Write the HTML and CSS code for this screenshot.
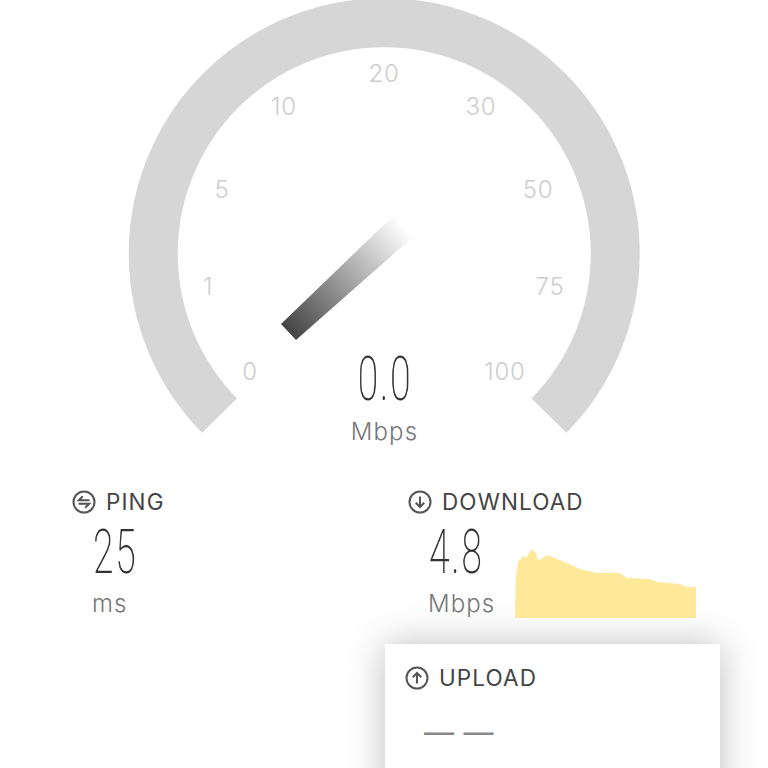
FILE: index.html
```html
<!DOCTYPE html>
<html lang="en">
<head>
<meta charset="utf-8">
<title>Speed test</title>
<link rel="stylesheet" href="styles.css">
</head>
<body>
<main class="app">
  <section class="gauge">
    <svg class="dial" width="768" height="470" viewBox="0 0 768 470" aria-hidden="true">
      <defs>
        <linearGradient id="needle" gradientUnits="userSpaceOnUse" x1="289" y1="332" x2="404" y2="226">
          <stop offset="0" stop-color="#444"/>
          <stop offset="1" stop-color="#fff"/>
        </linearGradient>
      </defs>
      <path class="arc" d="M219.500 415.600A231 231 0 1 1 549 415.600"/>
      <polygon points="281,324 296,340 414,236 393,216" fill="url(#needle)"/>
      <text class="tick" x="250" y="380">0</text>
      <text class="tick" x="208" y="295">1</text>
      <text class="tick" x="222" y="198">5</text>
      <text class="tick" x="284" y="115">10</text>
      <text class="tick" x="384" y="82">20</text>
      <text class="tick" x="481" y="115">30</text>
      <text class="tick" x="538" y="198">50</text>
      <text class="tick" x="550" y="295">75</text>
      <text class="tick" x="505" y="380">100</text>
    </svg>
    <div class="readout">
      <div class="num num-center">0.0</div>
      <div class="unit">Mbps</div>
    </div>
  </section>

  <section class="stats">
    <div class="stat">
      <h2 class="stat-head">
        <svg class="icon" width="24" height="24" viewBox="0 0 24 24" aria-hidden="true">
          <circle cx="12" cy="12" r="10.500"/>
          <path d="M17.500 10.300H6.800L10.800 6.300M6.500 13.700H17.200L13.200 17.700"/>
        </svg>
        <span class="stat-label">PING</span>
      </h2>
      <div class="num">25</div>
      <div class="unit">ms</div>
    </div>
    <div class="stat stat-download">
      <h2 class="stat-head">
        <svg class="icon" width="24" height="24" viewBox="0 0 24 24" aria-hidden="true">
          <circle cx="12" cy="12" r="10.500"/>
          <path d="M12 6.500V17M7.800 12.800L12 17l4.200-4.200"/>
        </svg>
        <span class="stat-label">DOWNLOAD</span>
      </h2>
      <div class="num">4.8</div>
      <div class="unit">Mbps</div>
      <svg class="chart" width="181" height="70" viewBox="515 549 181 70" aria-hidden="true">
        <polygon points="515,618 515.700,577 518,562 523,556 526,558 532,549 536,553 538,560 543,558 547,555 557,559 567,563 580,569 597,573 620,573 627,578 650,579 657,582 680,584 687,587 696,587 696,618"/>
      </svg>
    </div>
  </section>

  <section class="upload">
    <h2 class="stat-head">
      <svg class="icon" width="24" height="24" viewBox="0 0 24 24" aria-hidden="true">
        <circle cx="12" cy="12" r="10.500"/>
        <path d="M12 17.500V7M7.800 11.200L12 7l4.200 4.200"/>
      </svg>
      <span class="stat-label">UPLOAD</span>
    </h2>
    <div class="dashes">— —</div>
  </section>
</main>
</body>
</html>
```
FILE: styles.css
```css
* { box-sizing: border-box; }
html, body { margin: 0; padding: 0; background: #fff; }
.app {
  width: 768px;
  height: 768px;
  overflow: hidden;
  font-family: Inter, "Open Sans", sans-serif;
  color: #444;
}
.gauge { position: relative; height: 484px; }
.dial { display: block; }
.arc { fill: none; stroke: #d6d6d6; stroke-width: 49; }
.tick {
  font-family: Inter, sans-serif;
  font-size: 24px;
  font-weight: 300;
  letter-spacing: 0.8px;
  fill: #cdcdcd;
  text-anchor: middle;
}
.readout {
  position: absolute;
  left: 285px;
  top: 344px;
  width: 200px;
  text-align: center;
}
.readout .unit { margin-left: -1px; }
.num {
  font-family: Roboto, sans-serif;
  font-weight: 200;
  font-size: 62px;
  letter-spacing: 3px;
  line-height: 70px;
  height: 70px;
  color: #333;
  width: 100px;
  margin: -3px 0 0 21px;
  transform: scaleX(0.6);
  transform-origin: 0 50%;
  will-change: transform;
}
.num-center {
  width: 200px;
  margin: 0;
  transform-origin: 50% 50%;
}
.unit {
  font-size: 24px;
  font-weight: 300;
  letter-spacing: 1.100px;
  line-height: 28px;
  color: #777;
}
.readout .unit { margin-top: 4px; }
.stats {
  display: grid;
  grid-template-columns: 336px 1fr;
  padding-left: 72px;
  height: 160px;
}
.stat-head {
  display: flex;
  align-items: center;
  gap: 10px;
  margin: 0;
  height: 36px;
  font-size: 22.500px;
  font-weight: 400;
  letter-spacing: 1.100px;
  color: #444;
}
.stat-label { margin-bottom: 2px; }
.stat .unit { margin: 3px 0 0 20px; }
.stat-download { position: relative; }
.chart { position: absolute; left: 107px; top: 65px; display: block; }
.chart polygon { fill: #fee99a; }
.icon { flex: none; display: block; }
.icon circle, .icon path { fill: none; stroke: #555; stroke-width: 2; }
.upload {
  width: 335px;
  height: 200px;
  margin-left: 385px;
  padding: 16px 20px;
  background: #fff;
  box-shadow: 0 0 36px rgba(0, 0, 0, 0.26);
}
.dashes {
  margin: 18px 0 0 19px;
  font-family: Inter, sans-serif;
  font-size: 30px;
  font-weight: 400;
  line-height: 36px;
  word-spacing: 1px;
  color: #888;
}
```
